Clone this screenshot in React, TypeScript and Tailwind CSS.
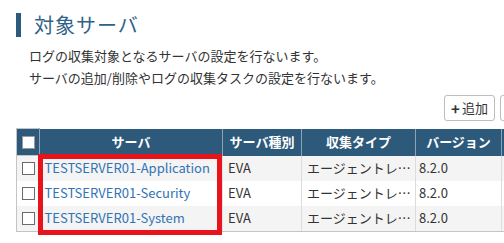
const rows = [
  { name: "TESTSERVER01-Application", kind: "EVA", type: "エージェントレ…", version: "8.2.0" },
  { name: "TESTSERVER01-Security", kind: "EVA", type: "エージェントレ…", version: "8.2.0" },
  { name: "TESTSERVER01-System", kind: "EVA", type: "エージェントレ…", version: "8.2.0" },
]

function Check({ header }: { header?: boolean }) {
  return (
    <span
      className={`block w-[13px] h-[13px] bg-white border ${
        header ? "border-[#9a9a9a]" : "border-[#6b6b6b]"
      }`}
    />
  )
}

export default function App() {
  return (
    <div
      className="w-[504px] h-[243px] overflow-hidden bg-white text-[#333]"
      style={{ fontFamily: '"Noto Sans CJK JP", "Noto Sans", sans-serif' }}
    >
      <div className="pt-[13px] pl-4 flex items-center">
        <div className="w-[5px] h-[24px] bg-[#2d5b7d]" />
        <h1 className="ml-[13px] text-[20px] leading-[24px] text-[#2f6288] tracking-[1px]">対象サーバ</h1>
      </div>

      <div className="mt-[8px] pl-[29px] text-[13px] leading-[22px] text-[#333]">
        <p>ログの収集対象となるサーバの設定を行ないます。</p>
        <p>サーバの追加/削除やログの収集タスクの設定を行ないます。</p>
      </div>

      <div className="mt-[6px] pl-[444px] flex gap-[5px] w-[600px]">
        <button className="shrink-0 w-[51px] h-[26px] rounded-[3px] border border-[#bdbdbd] bg-white text-[13px] text-[#333] flex items-center justify-center gap-[2px]">
          <span className="font-bold text-[15px] leading-none">+</span>
          追加
        </button>
        <button className="shrink-0 w-[40px] h-[26px] rounded-[3px] border border-[#bdbdbd] bg-white" />
      </div>

      <div className="relative mt-[7px] ml-4">
        <table className="table-fixed border-collapse w-[560px] text-[13px]">
          <colgroup>
            <col className="w-[23px]" />
            <col className="w-[183px]" />
            <col className="w-[79px]" />
            <col className="w-[114px]" />
            <col className="w-[86px]" />
            <col className="w-[75px]" />
          </colgroup>
          <thead>
            <tr className="h-[27px] bg-[#2d5a7a] text-white font-bold">
              <th className="border border-[#c4c4c4] border-r-[#8da3b5] pl-[5px]">
                <Check header />
              </th>
              <th className="border-r border-[#8da3b5] font-bold">サーバ</th>
              <th className="border-r border-[#8da3b5] font-bold">サーバ種別</th>
              <th className="border-r border-[#8da3b5] font-bold">収集タイプ</th>
              <th className="border-r border-[#8da3b5] font-bold">バージョン</th>
              <th className="font-bold"></th>
            </tr>
          </thead>
          <tbody>
            {rows.map((r, i) => (
              <tr key={r.name} className={`h-[25px] ${i % 2 === 0 ? "bg-[#f4f4f4]" : "bg-white"}`}>
                <td className="border-l border-[#c4c4c4] pl-[5px]">
                  <Check />
                </td>
                <td className="border-r border-[#e2e2e2] px-[5px] text-[#3173b5] whitespace-nowrap">
                  {r.name}
                </td>
                <td className="border-r border-[#dcdcdc] px-[5px] whitespace-nowrap">{r.kind}</td>
                <td className="border-r border-[#dcdcdc] px-[5px] whitespace-nowrap">{r.type}</td>
                <td className="border-r border-[#dcdcdc] px-[3px] whitespace-nowrap">{r.version}</td>
                <td></td>
              </tr>
            ))}
            <tr className="h-0">
              <td colSpan={6} className="border-b border-[#c4c4c4] border-l p-0" />
            </tr>
          </tbody>
        </table>

        <div className="absolute left-[22px] top-[26px] w-[184px] h-[81px] border-[5px] border-[#e8141c] pointer-events-none" />
      </div>
    </div>
  )
}
